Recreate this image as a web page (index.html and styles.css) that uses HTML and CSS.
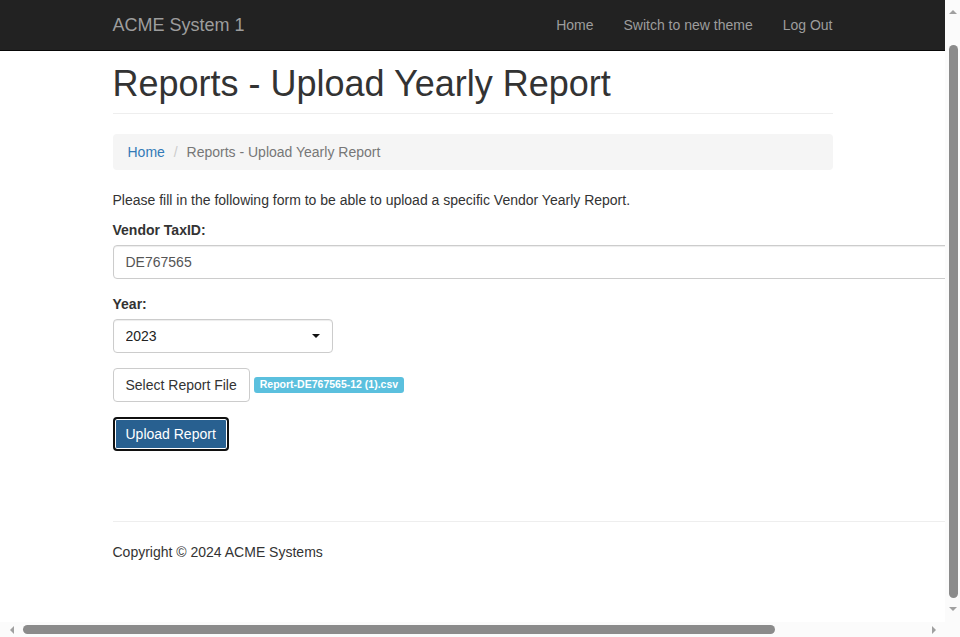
FILE: index.html
```html
<!DOCTYPE html>
<html lang="en">
<head>
<meta charset="utf-8">
<title>Reports - Upload Yearly Report</title>
<link rel="stylesheet" href="styles.css">
</head>
<body>
<div class="window">
  <div class="viewport">
    <nav class="navbar">
      <div class="container nav-inner">
        <a class="brand" href="#">ACME System 1</a>
        <ul class="nav-links">
          <li><a href="#">Home</a></li>
          <li><a href="#">Switch to new theme</a></li>
          <li><a href="#">Log Out</a></li>
        </ul>
      </div>
    </nav>
    <main class="container">
      <div class="page-header">
        <h1>Reports - Upload Yearly Report</h1>
      </div>
      <ol class="breadcrumb">
        <li><a href="#">Home</a></li>
        <li class="active">Reports - Upload Yearly Report</li>
      </ol>
      <p class="intro">Please fill in the following form to be able to upload a specific Vendor Yearly Report.</p>
      <form class="upload-form">
        <div class="form-group">
          <label for="taxid">Vendor TaxID:</label>
          <input id="taxid" class="form-control wide" type="text" value="DE767565">
        </div>
        <div class="form-group">
          <label for="year">Year:</label>
          <div class="select-wrap">
            <select id="year" class="form-control select">
              <option>2023</option>
            </select>
          </div>
        </div>
        <div class="form-group file-row">
          <button type="button" class="btn btn-default">Select Report File</button>
          <span class="badge-info">Report-DE767565-12 (1).csv</span>
        </div>
        <button type="button" class="btn btn-primary focused">Upload Report</button>
      </form>
      <footer class="footer">
        <hr class="wide">
        <p>Copyright © 2024 ACME Systems</p>
      </footer>
    </main>
  </div>
  <div class="vscroll">
    <div class="sb-btn"><span class="arrow up"></span></div>
    <div class="vtrack"><div class="vthumb"></div></div>
    <div class="sb-btn"><span class="arrow down"></span></div>
  </div>
  <div class="hscroll">
    <div class="sb-btn h"><span class="arrow left"></span></div>
    <div class="htrack"><div class="hthumb"></div></div>
    <div class="sb-btn h"><span class="arrow right"></span></div>
  </div>
  <div class="corner"></div>
</div>
</body>
</html>
```

FILE: styles.css
```css
* { box-sizing: border-box; }
html, body { margin: 0; padding: 0; }
body {
  font-family: "Liberation Sans", Arial, sans-serif;
  font-size: 14px;
  line-height: 20px;
  color: #333;
  background: #fff;
  overflow: hidden;
}
a { text-decoration: none; }

.window {
  display: grid;
  grid-template-columns: 945px 15px;
  grid-template-rows: 622px 15px;
  width: 960px;
  height: 637px;
  overflow: hidden;
}
.viewport {
  overflow: hidden;
  background: #fff;
}

.container {
  width: 750px;
  padding: 0 15px;
  margin: 0 auto;
}

.navbar {
  background: #222;
  border-bottom: 1px solid #080808;
  height: 51px;
}
.nav-inner {
  display: flex;
  justify-content: space-between;
  height: 50px;
}
.brand {
  display: block;
  padding: 15px;
  margin-left: -15px;
  font-size: 18px;
  line-height: 20px;
  color: #9d9d9d;
}
.nav-links {
  list-style: none;
  margin: 0 -15px 0 0;
  padding: 0;
  display: flex;
}
.nav-links a {
  display: block;
  padding: 15px;
  line-height: 20px;
  color: #9d9d9d;
}

.page-header {
  margin: 13px 0 20px;
  padding-bottom: 9px;
  border-bottom: 1px solid #eee;
}
.page-header h1 {
  margin: 0;
  font-size: 36px;
  font-weight: 500;
  line-height: 1.1;
  color: #333;
}

.breadcrumb {
  list-style: none;
  margin: 0 0 20px;
  padding: 8px 15px;
  background: #f5f5f5;
  border-radius: 4px;
}
.breadcrumb li { display: inline-block; }
.breadcrumb li + li::before {
  content: "/\00a0";
  padding: 0 5px;
  color: #ccc;
}
.breadcrumb a { color: #337ab7; }
.breadcrumb .active { color: #777; }

.intro { margin: 0 0 10px; }

.upload-form { padding-bottom: 50px; }
.form-group { margin-bottom: 15px; }
label {
  display: inline-block;
  margin-bottom: 5px;
  font-weight: bold;
}
.form-control {
  display: block;
  height: 34px;
  padding: 6px 12px;
  font-family: inherit;
  font-size: 14px;
  line-height: 20px;
  color: #555;
  background: #fff;
  border: 1px solid #ccc;
  border-radius: 4px;
  box-shadow: inset 0 1px 1px rgba(0,0,0,.075);
}
.wide { width: 1037px; }

.select-wrap {
  position: relative;
  width: 220px;
}
.select {
  width: 220px;
  appearance: none;
  -webkit-appearance: none;
  color: #222;
}
.select-wrap::after {
  content: "";
  position: absolute;
  left: 199px;
  top: 15px;
  border-left: 4px solid transparent;
  border-right: 4px solid transparent;
  border-top: 4px solid #111;
}

.btn {
  display: inline-block;
  height: 34px;
  padding: 6px 12px;
  font-family: inherit;
  font-size: 14px;
  line-height: 20px;
  border: 1px solid transparent;
  border-radius: 4px;
  vertical-align: middle;
  cursor: pointer;
}
.btn-default {
  background: #fff;
  color: #333;
  border-color: #ccc;
}
.btn-primary {
  background: #286090;
  color: #fff;
}
.btn-primary.focused {
  border: 2px solid #101010;
  box-shadow: inset 0 0 0 1px #fff;
  padding: 5px 11px;
}

.file-row { display: flex; align-items: center; }
.badge-info {
  margin-left: 4px;
  display: inline-block;
  padding: 2px 6px 3px;
  font-size: 10.5px;
  font-weight: bold;
  line-height: 11px;
  color: #fff;
  background: #5bc0de;
  border-radius: 3px;
  white-space: nowrap;
}

.footer hr {
  margin: 20px 0;
  border: 0;
  border-top: 1px solid #eee;
}
.footer p {
  margin: 0;
  padding-bottom: 114px;
}

/* simulated browser scrollbars */
.vscroll, .hscroll, .corner { background: #fbfbfb; }
.vscroll {
  display: flex;
  flex-direction: column;
}
.hscroll {
  display: flex;
}
.sb-btn {
  flex: 0 0 23px;
  display: flex;
  align-items: center;
  justify-content: center;
}
.arrow { width: 0; height: 0; }
.arrow.up {
  border-left: 4px solid transparent;
  border-right: 4px solid transparent;
  border-bottom: 4px solid #a0a0a0;
}
.arrow.down {
  border-left: 4px solid transparent;
  border-right: 4px solid transparent;
  border-top: 4px solid #a0a0a0;
  margin-top: -4px;
}
.arrow.left {
  border-top: 4px solid transparent;
  border-bottom: 4px solid transparent;
  border-right: 4px solid #a0a0a0;
}
.arrow.right {
  border-top: 4px solid transparent;
  border-bottom: 4px solid transparent;
  border-left: 4px solid #a0a0a0;
}
.vtrack, .htrack { flex: 1; display: flex; }
.vtrack { flex-direction: column; align-items: center; }
.htrack { align-items: center; }
.vthumb {
  margin-top: 22px;
  width: 9px;
  height: 553px;
  background: #8b8b8b;
  border-radius: 5px;
  margin-left: 1px;
}
.hthumb {
  width: 752px;
  height: 9px;
  background: #8b8b8b;
  border-radius: 5px;
}
```
